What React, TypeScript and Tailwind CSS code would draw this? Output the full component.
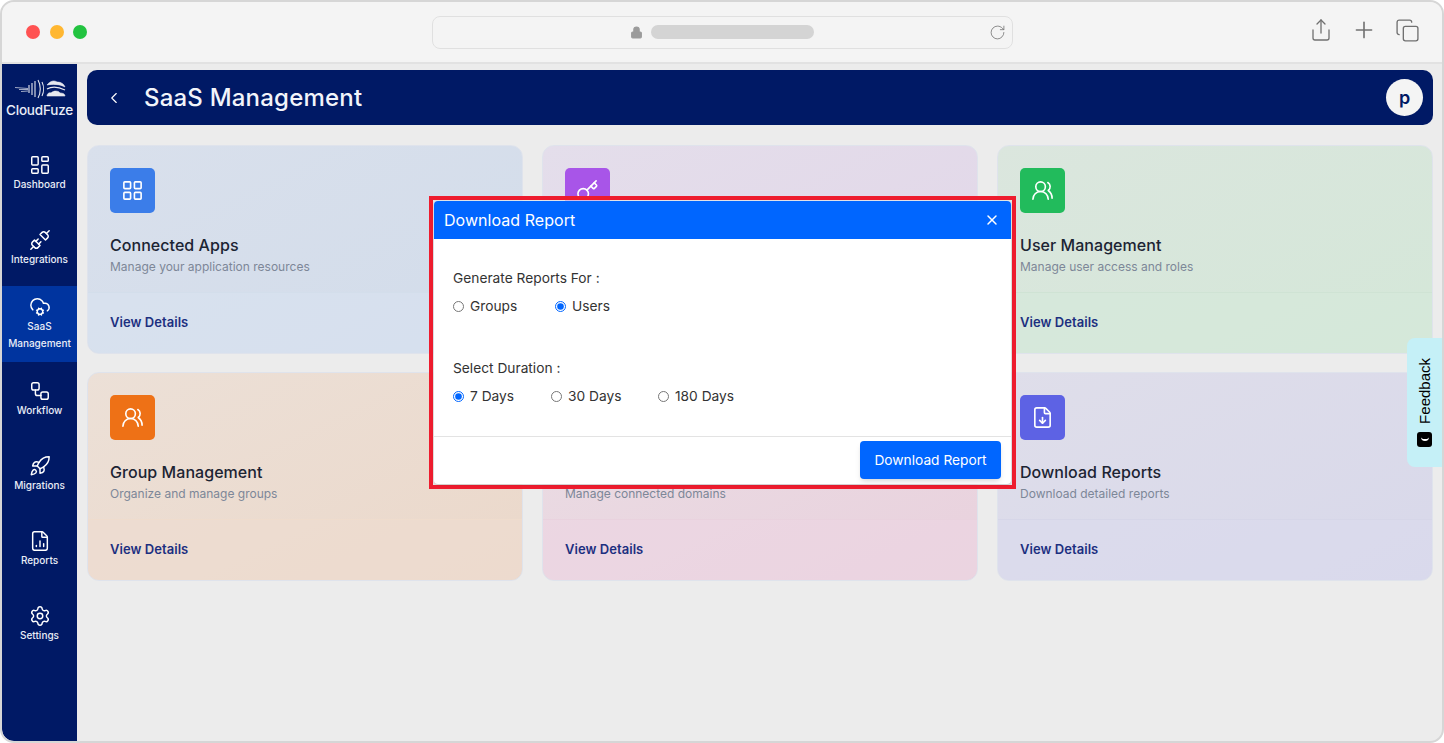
import {
  ChevronLeft,
  CloudCog,
  Copy,
  FileChartColumn,
  FileDown,
  Globe,
  Key,
  LayoutDashboard,
  LayoutGrid,
  Lock,
  Plus,
  RotateCw,
  Rocket,
  Settings,
  Share,
  Unplug,
  UsersRound,
  Workflow,
  X,
} from 'lucide-react';

const font = "font-['Inter','Noto_Sans',sans-serif]";

const navItems = [
  { label: 'Dashboard', icon: LayoutDashboard },
  { label: 'Integrations', icon: Unplug },
  { label: 'SaaS Management', icon: CloudCog, active: true },
  { label: 'Workflow', icon: Workflow },
  { label: 'Migrations', icon: Rocket },
  { label: 'Reports', icon: FileChartColumn },
  { label: 'Settings', icon: Settings },
];

const cards = [
  {
    title: 'Connected Apps',
    desc: 'Manage your application resources',
    icon: LayoutGrid,
    iconBg: 'bg-[#3b7de9]',
    bg: 'bg-gradient-to-br from-[#d9e0ec] to-[#d2dcea]',
    line: 'border-[#d3deeb]',
    foot: 'bg-[#d9e2f0]/60',
  },
  {
    title: 'License Management',
    desc: 'Manage your software licenses',
    icon: Key,
    iconBg: 'bg-[#a855e8]',
    bg: 'bg-gradient-to-br from-[#e4deeb] to-[#e2d6e8]',
    line: 'border-[#e0d4e8]',
    foot: 'bg-[#e6dcee]/60',
  },
  {
    title: 'User Management',
    desc: 'Manage user access and roles',
    icon: UsersRound,
    iconBg: 'bg-[#22bb5c]',
    bg: 'bg-gradient-to-br from-[#dbe6de] to-[#d4e7d8]',
    line: 'border-[#cfe3d4]',
    foot: 'bg-[#d6e9da]/60',
  },
  {
    title: 'Group Management',
    desc: 'Organize and manage groups',
    icon: UsersRound,
    iconBg: 'bg-[#ee7116]',
    bg: 'bg-gradient-to-br from-[#ece0d7] to-[#ebd8ca]',
    line: 'border-[#efdccd]',
    foot: 'bg-[#eedcd0]/60',
  },
  {
    title: 'Domain Management',
    desc: 'Manage connected domains',
    icon: Globe,
    iconBg: 'bg-[#ec4899]',
    bg: 'bg-gradient-to-br from-[#eadde4] to-[#e9d1dd]',
    line: 'border-[#e9d2de]',
    foot: 'bg-[#edd6e2]/60',
  },
  {
    title: 'Download Reports',
    desc: 'Download detailed reports',
    icon: FileDown,
    iconBg: 'bg-[#5d62e4]',
    bg: 'bg-gradient-to-br from-[#dfdeea] to-[#d8d8ea]',
    line: 'border-[#d6d6e8]',
    foot: 'bg-[#dadaec]/60',
  },
];

const Radio = ({ label, checked, className }: { label: string; checked?: boolean; className: string }) => (
  <label className={`flex items-center gap-[6px] text-[13.75px] leading-5 text-[#333] ${className}`}>
    <input type="radio" readOnly checked={!!checked} className="m-0 h-[11px] w-[11px] accent-[#0066ff]" />
    {label}
  </label>
);

const Logo = () => (
  <svg width="52" height="22" viewBox="0 0 52 22" fill="none" stroke="white" className="opacity-90">
    <path d="M1 9.5l13 1M5 11.5h9M7 13.5l7-.5" strokeWidth="0.7" />
    <path d="M15 7v8M18 5v12M21 3v16M24 2c3 5 3 13 0 18M28 4c2 4 2 10 0 14" strokeWidth="1.1" />
    <path d="M33 7c3-4 7-5 10-3 4 0 7 2 8 5-5-3-13-3-18-2z" fill="white" strokeWidth="0.6" />
    <path d="M33 11c5-3 12-2 18 1" strokeWidth="1.2" />
    <path d="M33 18c0-2 2-4 4-3 3-3 8-2 9 0 3 0 5 1 5 3z" fill="white" strokeWidth="0.6" />
  </svg>
);

const Sidebar = () => (
  <aside className="flex w-[75px] shrink-0 flex-col rounded-bl-[12px] bg-[#001965]">
    <div className="flex h-[72px] flex-col items-center pt-[14px]">
      <Logo />
      <span className="mt-[2px] text-[13.5px] font-medium leading-4 tracking-[-0.2px] text-[#e9edf7]">CloudFuze</span>
    </div>
    {navItems.map(({ label, icon: Icon, active }) => (
      <div
        key={label}
        className={`flex h-[75.2px] flex-col items-center ${active ? 'bg-[#00349f] pt-[10px]' : 'pt-[18px]'}`}
      >
        <Icon size={22} strokeWidth={1.6} className="text-white" />
        <span
          className={`text-center text-[10px] font-medium text-[#e9edf7] ${
            active ? 'w-[70px] leading-[17px]' : 'leading-4'
          }`}
        >
          {label}
        </span>
      </div>
    ))}
  </aside>
);

const Card = ({ card }: { card: (typeof cards)[number] }) => {
  const Icon = card.icon;
  return (
    <div className={`flex h-[208.5px] flex-col rounded-[12px] border border-[#dfe3ec] ${card.bg}`}>
      <div className={`h-[147px] border-b px-[22px] pt-[21.5px] ${card.line}`}>
        <div className={`flex h-[45px] w-[45px] items-center justify-center rounded-[5px] ${card.iconBg}`}>
          <Icon size={23} strokeWidth={1.7} className="text-white" />
        </div>
        <p className="mt-[20.5px] text-[16px] font-medium leading-6 tracking-[0.05px] text-[#1c2433]">{card.title}</p>
        <p className="mt-[2px] text-[12px] leading-4 text-[#7d8798]">{card.desc}</p>
      </div>
      <div className={`flex flex-1 items-start rounded-b-[12px] px-[22px] pt-[19px] ${card.foot}`}>
        <span className="text-[13px] font-semibold leading-5 tracking-[0.05px] text-[#1c2f80]">View Details</span>
      </div>
    </div>
  );
};

const DownloadModal = () => (
  <div className="absolute left-[429px] top-[196px] h-[293px] w-[587px] border-4 border-[#ee1c2e] bg-[#e8e8e8]/70 px-[1px] pt-[1px]">
    <div className="flex h-[283px] w-[577px] flex-col overflow-hidden rounded-[4px] bg-white shadow-sm">
      <div className="flex h-[38px] shrink-0 items-center justify-between bg-[#0066ff] pl-[10px] pr-[11px]">
        <span className="text-[16px] leading-6 tracking-[0.05px] text-white">Download Report</span>
        <X size={16} strokeWidth={2.2} className="text-white" />
      </div>
      <div className="h-[198px] border-b border-[#e3e3e3] px-[19px] pt-[29px]">
        <p className="text-[13.75px] leading-5 text-[#333]">Generate Reports For :</p>
        <div className="mt-[8px] flex">
          <Radio label="Groups" className="w-[102px]" />
          <Radio label="Users" checked className="w-[100px]" />
        </div>
        <p className="mt-[42px] text-[13.75px] leading-5 text-[#333]">Select Duration :</p>
        <div className="mt-[8px] flex">
          <Radio label="7 Days" checked className="w-[98px]" />
          <Radio label="30 Days" className="w-[107px]" />
          <Radio label="180 Days" className="w-[110px]" />
        </div>
      </div>
      <div className="flex flex-1 items-start justify-end pr-[10px] pt-[4px]">
        <button className="h-[38px] w-[141px] rounded-[4px] bg-[#0066ff] text-[13.75px] font-normal text-white shadow-md">
          Download Report
        </button>
      </div>
    </div>
  </div>
);

const BrowserBar = () => (
  <div className="flex h-[62px] shrink-0 items-center border-b-2 border-[#e2e2e2] bg-[#f4f4f4]">
    <div className="flex w-[430px] gap-[9.5px] pl-[24px]">
      <span className="h-[14px] w-[14px] rounded-full bg-[#ff5252]" />
      <span className="h-[14px] w-[14px] rounded-full bg-[#ffb731]" />
      <span className="h-[14px] w-[14px] rounded-full bg-[#22c340]" />
    </div>
    <div className="flex h-[33px] w-[581px] items-center rounded-[8px] border border-[#e0e0e0] pl-[197px] pr-[6px]">
      <Lock size={13} fill="#9b9b9b" className="text-[#9b9b9b]" />
      <span className="ml-[8px] h-[14px] w-[163px] rounded-full bg-[#d4d4d4]" />
      <RotateCw size={17} strokeWidth={1.1} className="ml-auto text-[#707070]" />
    </div>
    <div className="-mt-[4px] ml-auto flex items-center gap-[18px] pr-[22px]">
      <Share size={24} strokeWidth={1.3} className="text-[#707070]" />
      <Plus size={26} strokeWidth={1.5} className="text-[#707070]" />
      <Copy size={25} strokeWidth={1.3} className="text-[#707070]" />
    </div>
  </div>
);

export default function App() {
  return (
    <div className={`relative h-[743px] w-[1444px] overflow-hidden bg-white ${font}`}>
      <div className="flex h-full flex-col overflow-hidden rounded-[14px] border-2 border-[#d6d6d6] bg-[#ececec]">
        <BrowserBar />
        <div className="flex min-h-0 flex-1">
          <Sidebar />
          <main className="flex-1 pl-[10px] pr-[9px] pt-[6px]">
            <header className="flex h-[55px] items-center rounded-[10px] bg-[#001965] pl-[18px] pr-[10px]">
              <ChevronLeft size={18} strokeWidth={1.5} className="text-white" />
              <h1 className="ml-[21px] text-[24px] font-medium tracking-[0.2px] text-[#f2f4fa]">SaaS Management</h1>
              <div className="ml-auto flex h-[37px] w-[37px] items-center justify-center rounded-full bg-[#f4f4f4] text-[18px] font-semibold text-[#001965]">
                p
              </div>
            </header>
            <div className="mt-[20px] grid grid-cols-3 gap-x-[19px] gap-y-[18.5px]">
              {cards.map(card => (
                <Card key={card.title} card={card} />
              ))}
            </div>
          </main>
        </div>
      </div>
      <DownloadModal />
      <div className="absolute left-[1407px] top-[338px] flex h-[129px] w-[35px] flex-col items-center justify-center gap-[8px] rounded-l-[8px] bg-[#c5f0f7]">
        <span className="rotate-180 font-['Liberation_Sans',sans-serif] text-[15px] leading-none text-black [writing-mode:vertical-rl]">
          Feedback
        </span>
        <span className="flex h-[15px] w-[15px] items-center justify-center rounded-[3px] bg-black">
          <span className="h-[4px] w-[8px] rounded-b-full border-b-2 border-white" />
        </span>
      </div>
    </div>
  );
}
